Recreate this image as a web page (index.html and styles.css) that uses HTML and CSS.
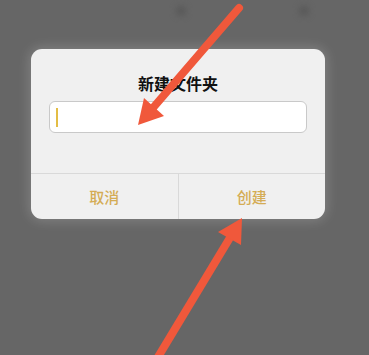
FILE: index.html
```html
<!DOCTYPE html>
<html lang="zh">
<head>
<meta charset="utf-8">
<link rel="stylesheet" href="styles.css">
</head>
<body>
<div class="screen">
  <div class="bg-row">
    <span class="blob"></span>
    <span class="blob"></span>
  </div>
  <div class="dialog">
    <div class="title">新建文件夹</div>
    <div class="field"><span class="cursor"></span></div>
    <div class="actions">
      <div class="btn">取消</div>
      <div class="btn">创建</div>
    </div>
  </div>
  <svg class="arrows" width="369" height="355" viewBox="0 0 369 355">
    <line x1="239" y1="8" x2="152" y2="109" stroke="#f0583b" stroke-width="8" stroke-linecap="round"/>
    <polygon points="138,125 164,116 144,98" fill="#f0583b"/>
    <line x1="155" y1="362" x2="231" y2="236" stroke="#f0583b" stroke-width="8"/>
    <polygon points="242,218 241,245 218,232" fill="#f0583b"/>
  </svg>
</div>
</body>
</html>
```

FILE: styles.css
```css
html, body {
  margin: 0;
  padding: 0;
}
body {
  background: #666666;
  font-family: "Noto Sans CJK SC", "Noto Sans", sans-serif;
}
.screen {
  position: relative;
  width: 369px;
  height: 355px;
  overflow: hidden;
}
.bg-row {
  height: 49px;
  display: flex;
  justify-content: flex-end;
  gap: 113px;
  padding-right: 60px;
  box-sizing: border-box;
  padding-top: 6px;
}
.blob {
  width: 10px;
  height: 10px;
  border-radius: 50%;
  background: #585858;
  filter: blur(3px);
}
.dialog {
  margin-left: 31px;
  width: 294px;
  height: 170px;
  background: #f0f0f0;
  border-radius: 11px;
  box-shadow: 0 0 12px 2px rgba(255, 255, 255, 0.18);
  display: flex;
  flex-direction: column;
  overflow: hidden;
}
.title {
  margin-top: 24px;
  height: 20px;
  line-height: 20px;
  text-align: center;
  font-size: 16px;
  font-weight: 700;
  color: #111;
}
.field {
  margin: 8px 18px 0 18px;
  height: 32px;
  box-sizing: border-box;
  background: #ffffff;
  border: 1px solid #c9c9c9;
  border-radius: 6px;
  display: flex;
  align-items: center;
  padding-left: 6px;
}
.cursor {
  width: 1.5px;
  height: 19px;
  background: #e3bd45;
}
.actions {
  margin-top: 40px;
  flex: 1;
  display: flex;
  border-top: 1px solid #d9d9d9;
}
.btn {
  flex: 1;
  display: flex;
  align-items: center;
  justify-content: center;
  font-size: 15px;
  font-weight: 500;
  color: #d4ac55;
}
.btn + .btn {
  border-left: 1px solid #d9d9d9;
}
.arrows {
  position: absolute;
  left: 0;
  top: 0;
}
```
